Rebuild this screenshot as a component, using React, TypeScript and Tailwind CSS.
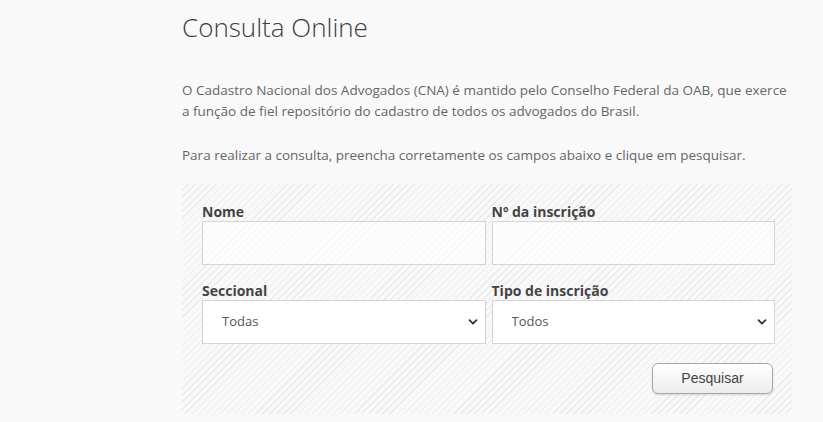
import React from 'react';

function Chevron() {
  return (
    <svg
      className="pointer-events-none absolute right-[8px] top-1/2 -translate-y-1/2"
      width="10"
      height="10"
      viewBox="0 0 10 10"
      fill="none"
    >
      <path d="M1.5 3.2 5 6.7 8.5 3.2" stroke="#333" strokeWidth="1.8" strokeLinecap="round" strokeLinejoin="round" />
    </svg>
  );
}

function Field({ label, children }: { label: string; children: React.ReactNode }) {
  return (
    <div className="flex flex-col">
      <label className="h-[18px] text-[14px] font-bold leading-[18px] text-[#444]">{label}</label>
      {children}
    </div>
  );
}

function SelectBox({ value }: { value: string }) {
  return (
    <div className="relative">
      <select
        defaultValue={value}
        className="h-[44px] w-full appearance-none border border-[#d4d4d4] bg-white pl-[19px] text-[13px] text-[#555] outline-none"
      >
        <option>{value}</option>
      </select>
      <Chevron />
    </div>
  );
}

export default function App() {
  return (
    <div className="min-h-[422px] bg-[#f9f9f9] font-['Open_Sans',sans-serif]">
      <div className="w-[792px] pl-[182px] pt-[11px]">
        <h1 className="text-[26px] font-light leading-[32px] text-[#3a3f45]">Consulta Online</h1>

        <div className="mt-[37px] text-[13.5px] leading-[21px] text-[#666]">
          <p>
            O Cadastro Nacional dos Advogados (CNA) é mantido pelo Conselho Federal da OAB, que exerce
            <br />a função de fiel repositório do cadastro de todos os advogados do Brasil.
          </p>
          <p className="mt-[23px]">Para realizar a consulta, preencha corretamente os campos abaixo e clique em pesquisar.</p>
        </div>

        <div className="mt-[18px] bg-[repeating-linear-gradient(135deg,#f9f9f9_0px,#f9f9f9_4px,#ebebeb_4px,#ebebeb_5px)] pb-[20px] pl-[20px] pr-[17px] pt-[19px]">
          <div className="grid grid-cols-2 gap-x-[6px] gap-y-[17px]">
            <Field label="Nome">
              <input className="h-[44px] w-full border border-[#d4d4d4] bg-white/60 outline-none" />
            </Field>
            <Field label="Nº da inscrição">
              <input className="h-[44px] w-full border border-[#d4d4d4] bg-white/60 outline-none" />
            </Field>
            <Field label="Seccional">
              <SelectBox value="Todas" />
            </Field>
            <Field label="Tipo de inscrição">
              <SelectBox value="Todos" />
            </Field>
          </div>
          <div className="mt-[19px] flex justify-end">
            <button className="mr-[2px] h-[31px] w-[121px] rounded-[6px] border border-[#a9a9a9] bg-gradient-to-b from-white to-[#ececec] font-['Liberation_Sans',sans-serif] text-[14px] text-[#444] shadow-[0_1px_2px_rgba(0,0,0,0.15)]">
              Pesquisar
            </button>
          </div>
        </div>
      </div>
    </div>
  );
}
